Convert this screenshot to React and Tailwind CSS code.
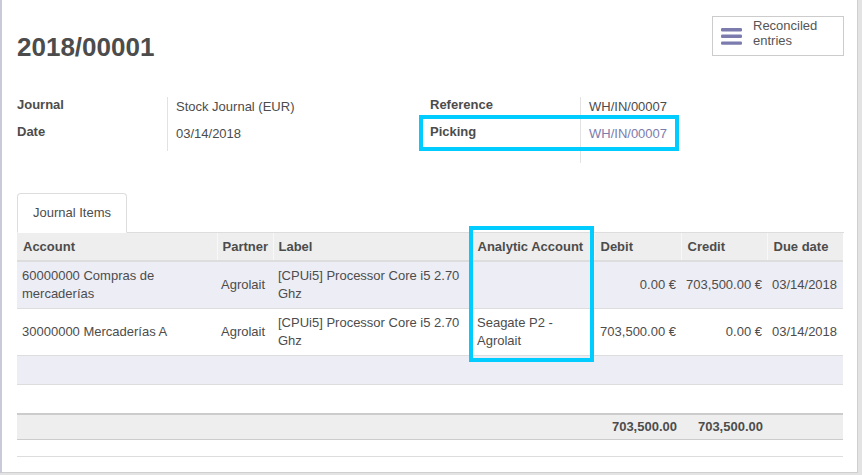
import React from "react";

const rows = [
  {
    account: "60000000 Compras de mercaderías",
    partner: "Agrolait",
    label: "[CPUi5] Processor Core i5 2.70 Ghz",
    analytic: "",
    debit: "0.00 €",
    credit: "703,500.00 €",
    due: "03/14/2018",
  },
  {
    account: "30000000 Mercaderías A",
    partner: "Agrolait",
    label: "[CPUi5] Processor Core i5 2.70 Ghz",
    analytic: "Seagate P2 - Agrolait",
    debit: "703,500.00 €",
    credit: "0.00 €",
    due: "03/14/2018",
  },
];

const BarsIcon = () => (
  <svg width="21" height="17" viewBox="0 0 21 17" className="shrink-0">
    <rect x="0" y="0" width="21" height="3.4" rx="1.2" fill="#7c7bad" />
    <rect x="0" y="6.6" width="21" height="3.4" rx="1.2" fill="#7c7bad" />
    <rect x="0" y="13.4" width="21" height="3.4" rx="1.2" fill="#7c7bad" />
  </svg>
);

const FieldGroup = ({ fields, extraRow }) => (
  <div className="flex">
    <div className="w-[150px]">
      {fields.map((f) => (
        <div key={f.label} className="h-[27px] font-bold leading-[16px]">
          {f.label}
        </div>
      ))}
    </div>
    <div className="border-l border-[#e2e2e2] pl-[8px]">
      {fields.map((f) => (
        <div
          key={f.label}
          className={`h-[27px] leading-[19px] ${f.link ? "text-[#7c7bad]" : ""}`}
        >
          {f.value}
        </div>
      ))}
      {extraRow && <div className="h-[12px]" />}
    </div>
  </div>
);

export default function App() {
  return (
    <div className="w-[862px] h-[475px] overflow-hidden bg-[#e3e3e3] font-['Liberation_Sans',Arial,sans-serif] text-[13px] text-[#4c4c4c]">
      <div className="relative w-[858px] h-[473px] bg-white border-l-2 border-r border-b border-l-[#c9c9d9] border-r-[#cfcfcf] border-b-[#cfcfcf] pl-[15px] pr-[13px]">
        {/* header */}
        <div className="flex justify-between items-start pt-[16px]">
          <h1 className="mt-[15px] text-[26px] leading-[32px] font-bold">2018/00001</h1>
          <button className="flex items-center w-[132px] h-[40px] border border-[#cccccc] pl-[8px] pr-[10px] text-left">
            <BarsIcon />
            <span className="ml-[11px] -mt-[7px] leading-[15px] text-[#555555]">
              Reconciled
              <br />
              entries
            </span>
          </button>
        </div>

        {/* fields */}
        <div className="flex mt-[34px]">
          <div className="w-[413px]">
            <FieldGroup
              fields={[
                { label: "Journal", value: "Stock Journal (EUR)" },
                { label: "Date", value: "03/14/2018" },
              ]}
            />
          </div>
          <div>
            <FieldGroup
              extraRow
              fields={[
                { label: "Reference", value: "WH/IN/00007" },
                { label: "Picking", value: "WH/IN/00007", link: true },
              ]}
            />
          </div>
        </div>

        {/* tabs */}
        <div className="mt-[30px] flex border-b border-[#dddddd]">
          <div className="-mb-px h-[40px] rounded-t-[4px] border border-[#dddddd] border-b-white bg-white px-[15px] pt-[10px] leading-[18px]">
            Journal Items
          </div>
        </div>

        {/* list */}
        <table className="w-[826px] table-fixed border-collapse">
          <colgroup>
            <col className="w-[200px]" />
            <col className="w-[56px]" />
            <col className="w-[199px]" />
            <col className="w-[122px]" />
            <col className="w-[87px]" />
            <col className="w-[86px]" />
            <col className="w-[76px]" />
          </colgroup>
          <thead>
            <tr className="h-[28px] bg-[#eeeeee] border-b-2 border-[#dddddd] font-bold">
              <th className="px-[6px] text-left font-bold">Account</th>
              <th className="px-[5px] text-left font-bold border-l border-[#f8f8f8]">Partner</th>
              <th className="px-[5px] text-left font-bold border-l border-[#f8f8f8]">Label</th>
              <th className="px-[5px] text-left font-bold border-l border-[#f8f8f8]">Analytic Account</th>
              <th className="px-[6px] text-left font-bold border-l border-[#f8f8f8]">Debit</th>
              <th className="px-[6px] text-left font-bold border-l border-[#f8f8f8]">Credit</th>
              <th className="px-[6px] text-left font-bold border-l border-[#f8f8f8]">Due date</th>
            </tr>
          </thead>
          <tbody>
            {rows.map((r, i) => (
              <tr
                key={i}
                className={`border-b border-[#dddddd] leading-[18px] ${i % 2 === 0 ? "bg-[#ededf5]" : "bg-white"}`}
              >
                <td className="px-[5px] py-[5px] align-middle">{r.account}</td>
                <td className="px-[4px] py-[5px] align-middle">{r.partner}</td>
                <td className="px-[5px] py-[5px] align-middle">{r.label}</td>
                <td className="px-[5px] py-[5px] align-middle">{r.analytic}</td>
                <td className="px-[5px] py-[5px] align-middle text-right whitespace-nowrap">{r.debit}</td>
                <td className="px-[5px] py-[5px] align-middle text-right whitespace-nowrap">{r.credit}</td>
                <td className="px-[5px] py-[5px] align-middle whitespace-nowrap">{r.due}</td>
              </tr>
            ))}
            <tr className="h-[29px] bg-[#ededf5] border-b border-[#dddddd]">
              <td colSpan={7} />
            </tr>
            <tr className="h-[29px] bg-white">
              <td colSpan={7} />
            </tr>
          </tbody>
          <tfoot>
            <tr className="h-[26px] bg-[#eeeeee] border-t-2 border-b border-t-[#cccccc] border-b-[#cccccc] font-bold">
              <td colSpan={4} />
              <td className="px-[4px] text-right">703,500.00</td>
              <td className="px-[4px] text-right">703,500.00</td>
              <td />
            </tr>
          </tfoot>
        </table>
        <div className="h-[17px] w-[826px] border-b border-[#dddddd]" />

        {/* annotation highlights */}
        <div className="pointer-events-none absolute left-[417px] top-[115px] w-[260px] h-[36px] border-[4px] border-[#00ccff]" />
        <div className="pointer-events-none absolute left-[467px] top-[226px] w-[125px] h-[136px] border-[4px] border-[#00ccff]" />
      </div>
    </div>
  );
}
